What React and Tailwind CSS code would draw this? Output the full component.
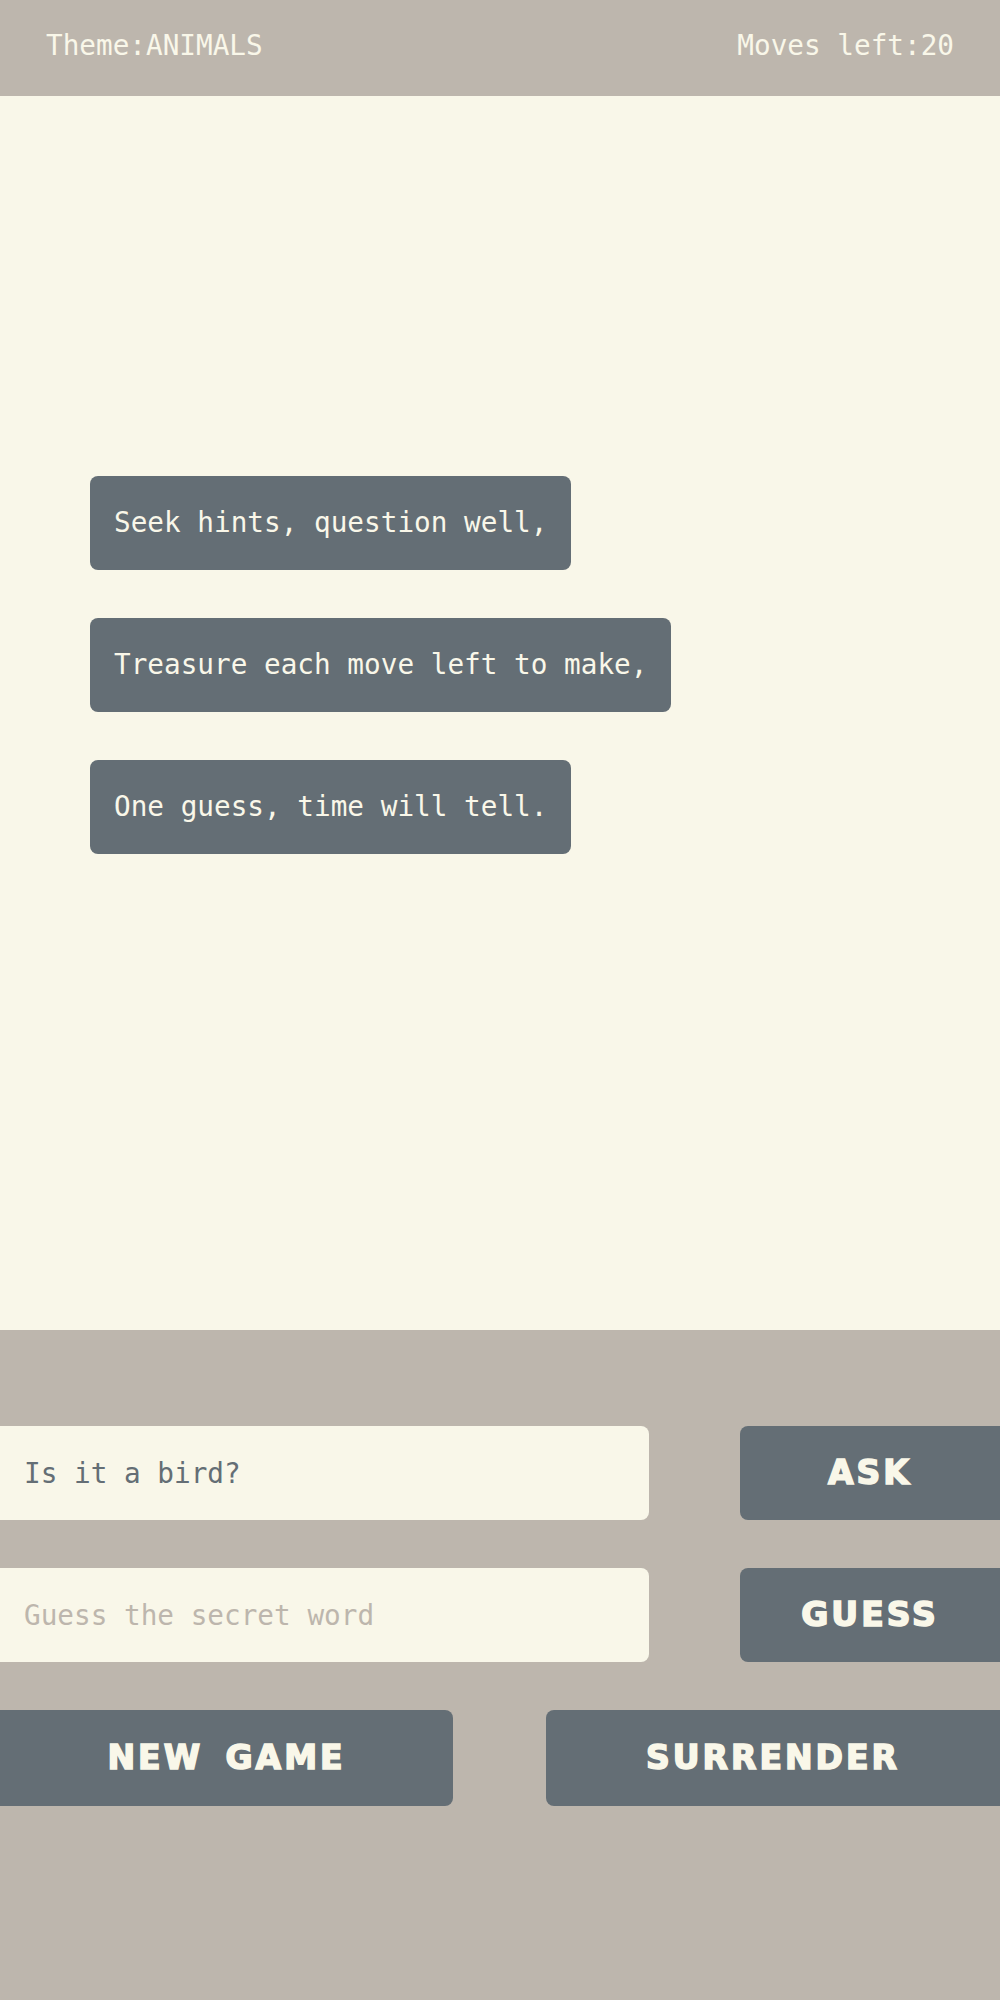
const mono = "font-['DejaVu_Sans_Mono','Liberation_Mono',monospace]";
const heavy =
  "font-['DejaVu_Sans','Liberation_Sans',sans-serif] font-bold text-[33px] tracking-[3px] [-webkit-text-stroke:1.6px_#f9f7e9] [word-spacing:8px]";

const lines = [
  "Seek hints, question well,",
  "Treasure each move left to make,",
  "One guess, time will tell.",
];

export default function App() {
  return (
    <div className={`w-[1000px] h-[2000px] overflow-hidden bg-[#bdb6ad] ${mono}`}>
      {/* top bar */}
      <header className="h-[96px] px-[46px] flex items-center justify-between text-[27.7px] text-[#f9f7e9] pb-1">
        <span>Theme:ANIMALS</span>
        <span>Moves left:20</span>
      </header>

      {/* riddle */}
      <main className="h-[1234px] bg-[#f9f7e9] pt-[380px] pl-[90px] flex flex-col items-start gap-[48px]">
        {lines.map((line) => (
          <div
            key={line}
            className="h-[94px] px-6 flex items-center rounded-lg bg-[#646e75] text-[#f9f7e9] text-[27.7px] whitespace-pre"
          >
            {line}
          </div>
        ))}
      </main>

      {/* controls */}
      <section className="pt-[96px] flex flex-col gap-[48px]">
        <div className="flex justify-between">
          <input
            defaultValue="Is it a bird?"
            className="w-[649px] h-[94px] pl-6 rounded-r-lg bg-[#f9f7e9] text-[#646e75] text-[27.7px] outline-none"
          />
          <button className={`w-[260px] h-[94px] rounded-l-lg bg-[#646e75] text-[#f9f7e9] ${heavy}`}>
            ASK
          </button>
        </div>
        <div className="flex justify-between">
          <input
            placeholder="Guess the secret word"
            className="w-[649px] h-[94px] pl-6 rounded-r-lg bg-[#f9f7e9] text-[#646e75] text-[27.7px] outline-none placeholder:text-[#bdb6ad]"
          />
          <button className={`w-[260px] h-[94px] rounded-l-lg bg-[#646e75] text-[#f9f7e9] ${heavy}`}>
            GUESS
          </button>
        </div>
        <div className="flex justify-between">
          <button className={`w-[453px] h-[96px] rounded-r-lg bg-[#646e75] text-[#f9f7e9] ${heavy}`}>
            NEW GAME
          </button>
          <button className={`w-[454px] h-[96px] rounded-l-lg bg-[#646e75] text-[#f9f7e9] ${heavy}`}>
            SURRENDER
          </button>
        </div>
      </section>
    </div>
  );
}
